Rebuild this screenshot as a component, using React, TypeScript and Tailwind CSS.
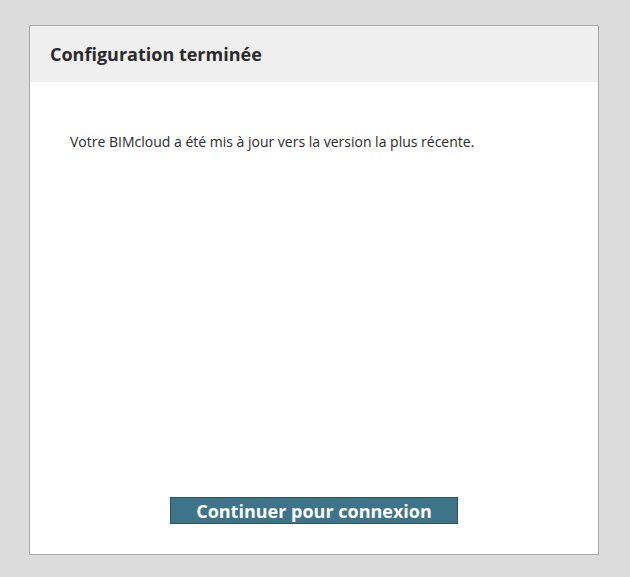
export default function App() {
  return (
    <div className="w-[630px] h-[577px] bg-[#dcdcdc] pt-[25px] pl-[29px]" style={{ fontFamily: '"Open Sans", sans-serif' }}>
      <div className="w-[570px] h-[530px] border border-[#a9a9a9] bg-white flex flex-col">
        <div className="h-[56px] bg-[#efefef] flex items-center pl-[20px] pt-[1px]">
          <h1 className="text-[18px] font-bold text-[#2b2b2b]">Configuration terminée</h1>
        </div>
        <div className="pl-[40px] pt-[50px] text-[14px] text-[#2b2b2b] leading-[20px]">
          Votre BIMcloud a été mis à jour vers la version la plus récente.
        </div>
        <div className="flex-1" />
        <div className="flex justify-center pb-[30px]">
          <button className="w-[288px] h-[27px] bg-[#3d7489] border border-[#2b5566] text-white text-[18px] font-bold leading-none">
            Continuer pour connexion
          </button>
        </div>
      </div>
    </div>
  );
}
